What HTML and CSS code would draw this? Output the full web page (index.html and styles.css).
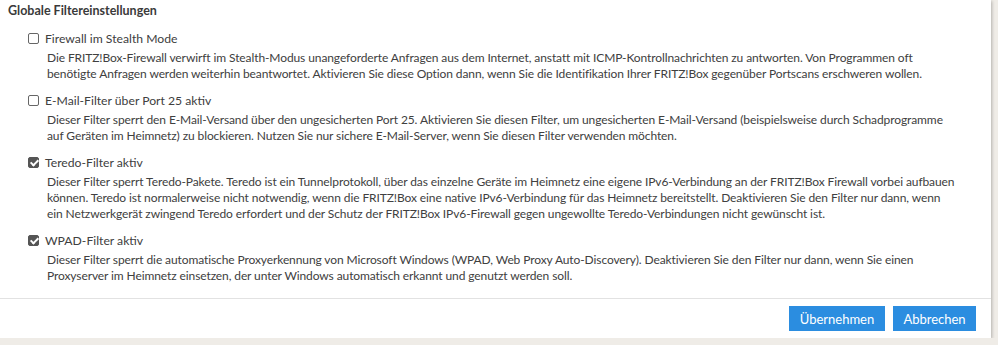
FILE: index.html
```html
<!DOCTYPE html>
<html lang="de">
<head>
  <meta charset="UTF-8" />
  <title>Globale Filtereinstellungen</title>
  <link rel="stylesheet" href="styles.css">
</head>
<body>
  <div class="panel">
    <div class="content">
      <h3 class="title">Globale Filtereinstellungen</h3>

      <div class="option">
        <label class="check"><span class="box"></span>Firewall im Stealth Mode</label>
        <p class="desc">Die FRITZ!Box-Firewall verwirft im Stealth-Modus unangeforderte Anfragen aus dem Internet, anstatt mit ICMP-Kontrollnachrichten zu antworten. Von Programmen oft<br>benötigte Anfragen werden weiterhin beantwortet. Aktivieren Sie diese Option dann, wenn Sie die Identifikation Ihrer FRITZ!Box gegenüber Portscans erschweren wollen.</p>
      </div>

      <div class="option">
        <label class="check"><span class="box"></span>E-Mail-Filter über Port 25 aktiv</label>
        <p class="desc">Dieser Filter sperrt den E-Mail-Versand über den ungesicherten Port 25. Aktivieren Sie diesen Filter, um ungesicherten E-Mail-Versand (beispielsweise durch Schadprogramme<br>auf Geräten im Heimnetz) zu blockieren. Nutzen Sie nur sichere E-Mail-Server, wenn Sie diesen Filter verwenden möchten.</p>
      </div>

      <div class="option">
        <label class="check"><span class="box checked"></span>Teredo-Filter aktiv</label>
        <p class="desc">Dieser Filter sperrt Teredo-Pakete. Teredo ist ein Tunnelprotokoll, über das einzelne Geräte im Heimnetz eine eigene IPv6-Verbindung an der FRITZ!Box Firewall vorbei aufbauen<br>können. Teredo ist normalerweise nicht notwendig, wenn die FRITZ!Box eine native IPv6-Verbindung für das Heimnetz bereitstellt. Deaktivieren Sie den Filter nur dann, wenn<br>ein Netzwerkgerät zwingend Teredo erfordert und der Schutz der FRITZ!Box IPv6-Firewall gegen ungewollte Teredo-Verbindungen nicht gewünscht ist.</p>
      </div>

      <div class="option">
        <label class="check"><span class="box checked"></span>WPAD-Filter aktiv</label>
        <p class="desc">Dieser Filter sperrt die automatische Proxyerkennung von Microsoft Windows (WPAD, Web Proxy Auto-Discovery). Deaktivieren Sie den Filter nur dann, wenn Sie einen<br>Proxyserver im Heimnetz einsetzen, der unter Windows automatisch erkannt und genutzt werden soll.</p>
      </div>
    </div>

    <div class="actions">
      <button class="btn btn-apply">Übernehmen</button>
      <button class="btn btn-cancel">Abbrechen</button>
    </div>
  </div>
</body>
</html>
```

FILE: styles.css
```css
body {
  margin: 0;
  background: #efece7;
  font-family: 'Lato', sans-serif;
  font-size: 12px;
  letter-spacing: -0.1px;
  color: #404040;
}
.panel {
  width: 991px;
  height: 338px;
  background: #fff;
  box-shadow: 1px 1px 3px rgba(0, 0, 0, 0.25);
  display: flex;
  flex-direction: column;
}
.content {
  flex: 1;
  padding: 2px 8px 0;
}
.title {
  margin: 0 0 11px;
  font-size: 12.5px;
  font-weight: 700;
  line-height: 17px;
  letter-spacing: 0;
  color: #3a3a3a;
}
.option {
  margin-bottom: 10px;
  padding-left: 20px;
}
.check {
  display: flex;
  align-items: center;
  gap: 6px;
  font-size: 12.2px;
  letter-spacing: 0;
  line-height: 17px;
}
.box {
  width: 9px;
  height: 9px;
  border: 1px solid #666;
  border-radius: 2px;
  background: #fff;
  position: relative;
}
.box.checked {
  background: #555;
  border-color: #555;
}
.box.checked::after {
  content: "";
  position: absolute;
  left: 3px;
  top: 0;
  width: 3px;
  height: 6px;
  border: solid #fff;
  border-width: 0 2px 2px 0;
  transform: rotate(45deg);
}
.desc {
  margin: 3px 0 0 19px;
  line-height: 16px;
  white-space: nowrap;
}
.actions {
  border-top: 1px solid #e2e2e2;
  height: 40px;
  display: flex;
  justify-content: flex-end;
  gap: 8px;
  padding: 7px 15px 0;
  box-sizing: border-box;
}
.btn {
  height: 25px;
  padding: 0;
  border: none;
  background: #2b8de0;
  color: #fff;
  font-family: 'Lato', sans-serif;
  font-size: 13px;
}
.btn-apply {
  width: 96px;
}
.btn-cancel {
  width: 83px;
}
```
